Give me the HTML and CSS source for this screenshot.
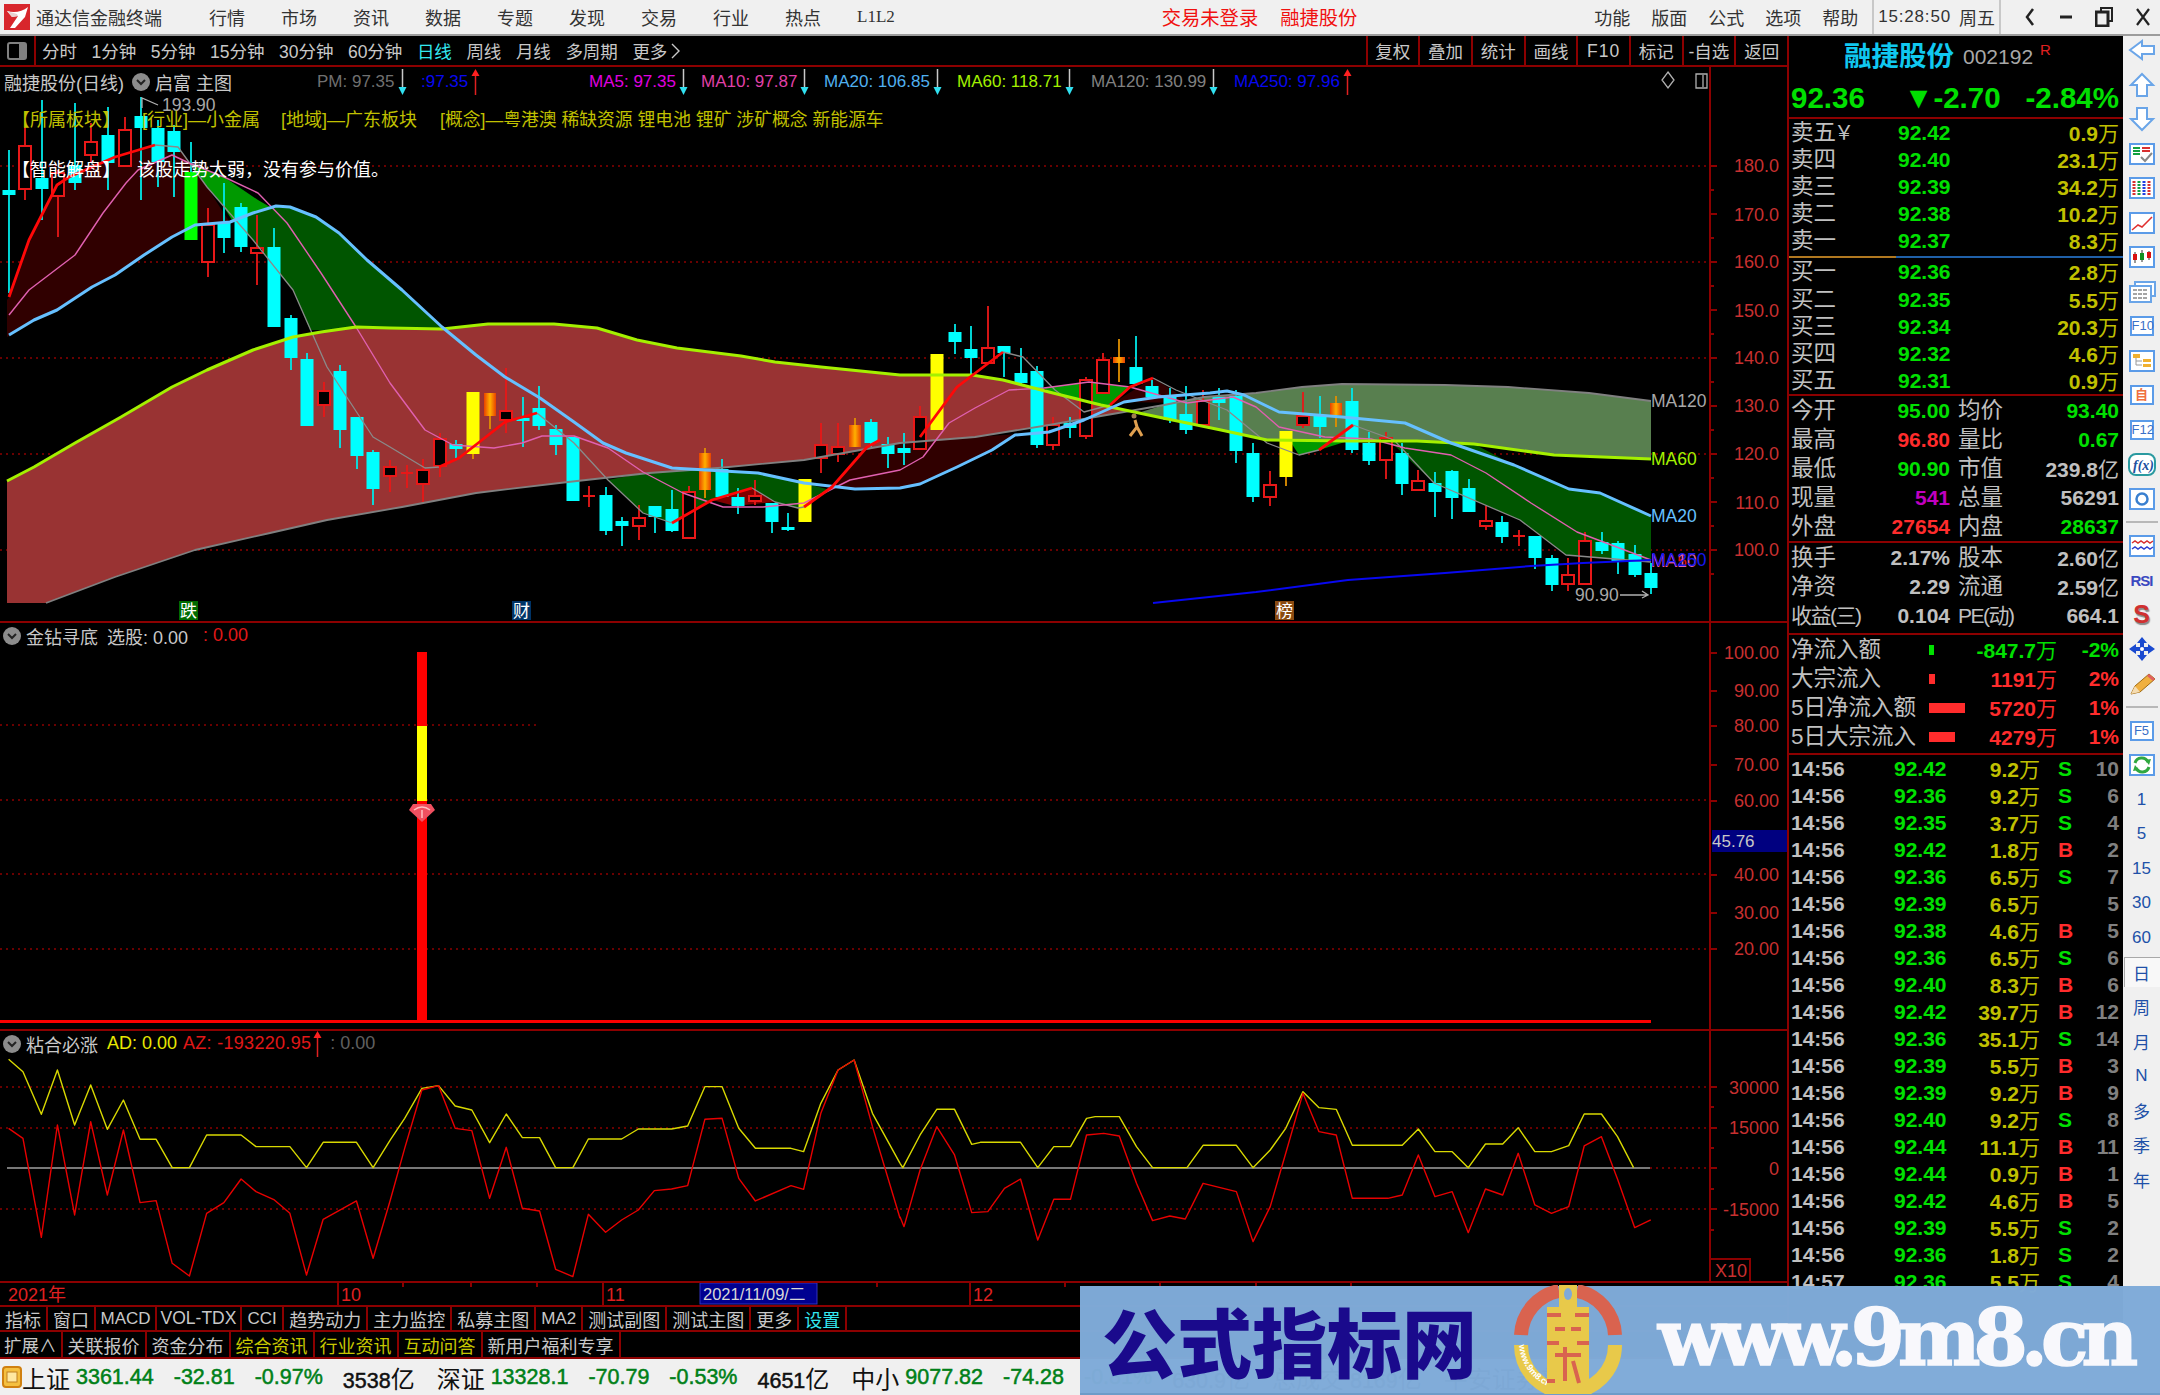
FILE: index.html
```html
<!DOCTYPE html>
<html lang="zh-CN">
<head>
<meta charset="utf-8">
<title>通达信金融终端</title>
<link rel="stylesheet" href="styles.css">
</head>
<body>
<svg class="defs" width="0" height="0" aria-hidden="true">
  <defs>
    <symbol id="arr-up" viewBox="0 0 9 26"><path d="M4.500 6V26" stroke="#e02020" stroke-width="1.500"/><path d="M4.500 0L8.500 7H.5Z" fill="#ff2020"/></symbol>
    <symbol id="arr-dn" viewBox="0 0 9 26"><path d="M4.500 0V20" stroke="#c8c8c8" stroke-width="1.500"/><path d="M4.500 26L8.500 18H.5Z" fill="#30e0f0"/></symbol>
    <symbol id="chev" viewBox="0 0 18 18"><circle cx="9" cy="9" r="9" fill="#8c8c8c"/><path d="M5 7l4 4 4-4" fill="none" stroke="#222" stroke-width="2"/></symbol>
    <linearGradient id="orange" x1="0" x2="1" y1="0" y2="0"><stop offset="0" stop-color="#e84000"/><stop offset=".5" stop-color="#ffb000"/><stop offset="1" stop-color="#e84000"/></linearGradient>
  </defs>
</svg>

<div class="app">
  <header class="titlebar">
    <svg class="logo" viewBox="0 0 26 26"><rect width="26" height="26" fill="#d8262c"/><path d="M24 3C18 8 10 9 3 7L8 13L14 12L6 24L11 24L21 13Z" fill="#fff"/><path d="M3 7L8 13L14 12L13 10Z" fill="#e8d0d0"/></svg>
    <span class="app-name">通达信金融终端</span>
    <nav class="menu">
      <span>行情</span><span>市场</span><span>资讯</span><span>数据</span><span>专题</span><span>发现</span><span>交易</span><span>行业</span><span>热点</span><span class="menu-l2">L1L2</span>
    </nav>
    <div class="login"><span>交易未登录</span><span>融捷股份</span></div>
    <nav class="menu-right"><span>功能</span><span>版面</span><span>公式</span><span>选项</span><span>帮助</span></nav>
    <div class="clock"><span class="clock-time">15:28:50</span><span class="clock-day">周五</span></div>
    <div class="winbtns">
      <svg viewBox="0 0 14 20" class="win-a"><path d="M10 2L4 10L10 18" fill="none" stroke="#222" stroke-width="2.500"/></svg>
      <svg viewBox="0 0 14 20" class="win-b"><path d="M1 10H13" stroke="#222" stroke-width="3"/></svg>
      <svg viewBox="0 0 18 20" class="win-c"><path d="M6 4V1H17V14H13" fill="none" stroke="#222" stroke-width="2"/><rect x="1" y="5" width="12" height="14" fill="none" stroke="#222" stroke-width="3"/></svg>
      <svg viewBox="0 0 16 20" class="win-d"><path d="M2 2L14 18M14 2L2 18" stroke="#222" stroke-width="2.200"/></svg>
    </div>
  </header>

  <div class="middle">
    <main class="left">
      <div class="toolbar">
        <div class="tb-icon"><span class="tb-icon-box"></span></div>
        <div class="periods">
          <span>分时</span><span>1分钟</span><span>5分钟</span><span>15分钟</span><span>30分钟</span><span>60分钟</span><span class="on">日线</span><span>周线</span><span>月线</span><span>多周期</span><span class="more">更多<svg class="more-ic" viewBox="0 0 9 18"><path d="M1 2L8 9L1 16" fill="none" stroke="#c8c8c8" stroke-width="1.400"/></svg></span>
        </div>
        <div class="tb-btns"><span>复权</span><span>叠加</span><span>统计</span><span>画线</span><span class="tb-f10">F10</span><span>标记</span><span>-自选</span><span>返回</span></div>
      </div>

      <section class="pane pane-main">
        <svg class="chart" width="1787" height="554" viewBox="0 67 1787 554">
          <path class="grid" d="M0 166H1710M0 262H1710M0 358H1710M0 454H1710M0 550H1710"/>
          <path class="axis" d="M1710 67V621"/>
          <path class="axis" d="M1710 166h7M1710 214h7M1710 262h7M1710 310h7M1710 358h7M1710 406h7M1710 454h7M1710 502h7M1710 550h7M1710 190h4M1710 238h4M1710 286h4M1710 334h4M1710 382h4M1710 430h4M1710 478h4M1710 526h4M1710 574h4"/>
          <g class="ax">
            <text x="1779" y="172">180.0</text><text x="1779" y="221">170.0</text><text x="1779" y="268">160.0</text><text x="1779" y="317">150.0</text><text x="1779" y="364">140.0</text><text x="1779" y="412">130.0</text><text x="1779" y="460">120.0</text><text x="1779" y="509">110.0</text><text x="1779" y="556">100.0</text>
          </g>

          <polygon fill="#300000" points="9,297 29,240 57,185 69,177 115,157 155,145 178,147 207,187 225,215 230,222 195,225 172,237 144,255 115,275 92,287 57,310 34,320 7,337 7,300"/>
          <polygon fill="#009900" points="178,147 189,163 224,177 258,200 270,207 253,213 232,220 222,204 207,187"/>
          <polygon fill="#005500" points="232,220 253,213 276,206 290,207 316,217 339,233 367,260 402,290 442,329 356,330 310,330 293,290 253,240"/>
          <polygon fill="#005500" points="608,480 643,473 672,468 706,470 758,473 804,483 830,490 798,508 775,502 752,488 712,500 672,523 643,513"/>
          <polygon fill="#800000" points="712,500 752,488 775,502 735,506"/>
          <polygon fill="#300000" points="832,487 867,447 900,443 975,437 1049,432 1015,435 992,450 957,467 920,484 900,488 855,489"/>
          <polygon fill="#009900" points="1049,392 1044,388 1089,382 1130,387 1110,405 1101,405"/>
          <polygon fill="#300000" points="1110,405 1153,378 1180,395 1187,403 1124,402"/>

          <polygon fill="#993333" points="7,481 34,467 75,443 121,417 172,387 207,370 253,350 293,337 321,332 356,327 390,328 442,329 488,324 554,324 597,328 637,340 677,348 741,356 775,362 821,367 900,375 972,375 1003,380 1049,392 1101,405 1141,412 1124,412 1049,425 975,437 900,443 804,460 718,468 649,473 568,482 476,493 402,507 327,520 270,533 195,550 115,577 46,603 7,603"/>
          <polygon fill="#587f4f" points="1141,412 1164,405 1204,397 1256,393 1302,387 1342,384 1445,385 1508,387 1589,393 1651,401 1651,459 1554,455 1474,444 1417,441 1348,441 1267,440 1221,430 1158,417"/>
          <polygon fill="#005500" points="1382,441 1417,441 1474,444 1514,465 1569,489 1600,493 1651,516 1651,562 1566,555 1520,520 1434,483 1394,445"/>
          <polygon fill="#009900" points="1290,441 1348,441 1319,450 1299,455"/>

          <!-- candle wicks -->
          <path class="wick-c" d="M9 150V293M42 100V220M75 103V190M108 107V190M141 97V200M158 120V187M174 125V197M191 142V172M224 183V253M241 203V252M274 228V327M291 315V370M307 353V426M340 365V448M357 417V469M373 450V505M456 440V458M523 397V447M539 386V430M556 425V455M573 437V501M606 487V535M622 517V546M655 506V533M672 490V532M722 459V497M738 488V514M772 503V533M788 513V531M871 419V447M888 437V468M904 433V465M955 324V354M971 326V375M1004 346V377M1021 348V385M1037 366V448M1070 417V438M1136 336V386M1152 380V397M1170 388V423M1186 386V434M1219 388V420M1236 390V463M1253 443V502M1320 396V438M1352 388V453M1369 432V465M1402 443V495M1435 472V517M1452 470V519M1469 479V512M1502 516V543M1535 536V569M1552 555V591M1602 532V554M1618 541V574M1635 545V577M1651 563V594"/>
          <path class="wick-r" d="M25 127V200M58 170V237M91 123V163M125 117V166M208 208V277M257 215V285M324 382V417M390 460V492M407 465V488M423 459V503M440 433V477M506 368V433M589 486V507M639 505V540M689 486V538M755 480V505M821 423V473M838 423V462M920 406V449M988 306V363M1053 417V450M1086 377V439M1103 353V393M1203 390V425M1270 471V506M1303 392V428M1386 432V479M1418 470V490M1486 506V530M1519 530V546M1568 558V591M1585 532V584M401 473H413M583 496H595M1513 536H1525"/>
          <path class="wick-o" d="M490 393V429M705 448V498M855 418V447M1119 339V382M1336 396V427M473 454V459M1286 477V486"/>
          <path class="body-c" d="M9 190V195M42 178V189M75 165V183M108 135V163M141 116V128M158 128V162M174 131V152M224 223V238M241 207V247M274 247V327M291 318V358M307 359V426M340 371V430M357 417V456M373 452V489M456 444V449M523 418V421M539 408V426M556 429V445M573 437V501M606 495V531M622 521V526M655 506V517M672 509V531M722 469V497M738 497V506M772 503V522M788 527V530M871 422V443M888 444V454M904 448V453M955 332V342M971 349V358M1004 346V353M1021 373V383M1037 371V445M1070 423V428M1136 367V384M1152 386V397M1170 397V420M1186 414V430M1219 397V403M1236 396V451M1253 453V497M1320 416V427M1352 401V450M1369 443V461M1402 453V484M1435 483V492M1452 471V498M1469 488V512M1502 522V537M1535 536V558M1552 558V585M1602 542V551M1618 543V562M1635 554V575M1651 573V588"/>
          <path class="body-r" d="M19 146h12v43h-12zM52 173h12v23h-12zM85 142h12v13h-12zM119 130h12v36h-12zM202 225h12v37h-12zM251 248h12v5h-12zM318 391h12v14h-12zM384 467h12v9h-12zM417 470h12v14h-12zM434 439h12v27h-12zM500 411h12v9h-12zM633 518h12v8h-12zM683 492h12v46h-12zM749 496h12v5h-12zM815 445h12v13h-12zM832 447h12v7h-12zM914 417h12v32h-12zM982 348h12v15h-12zM1047 425h12v20h-12zM1080 380h12v56h-12zM1097 360h12v33h-12zM1197 401h12v24h-12zM1264 485h12v12h-12zM1297 416h12v9h-12zM1380 438h12v22h-12zM1412 481h12v9h-12zM1480 521h12v5h-12zM1562 575h12v9h-12zM1579 541h12v43h-12z"/>
          <g fill="url(#orange)">
            <rect x="484" y="393" width="12" height="23"/><rect x="699" y="453" width="12" height="37"/><rect x="849" y="425" width="12" height="22"/><rect x="1113" y="357" width="12" height="6"/><rect x="1330" y="403" width="12" height="12"/>
          </g>
          <path class="body-y" d="M473 392V454M805 479V522M937 354V430M1286 431V477"/>
          <path class="body-g" d="M191 172V240"/>

          <!-- moving averages -->
          <polyline class="ln ma5g" points="155,145 178,147 207,187 253,240 293,290 327,367 373,437 390,447 425,468 439,467"/>
          <polyline class="ln ma5g" points="537,413 574,443 608,480 643,513 672,523"/>
          <polyline class="ln ma5g" points="752,488 775,502 798,508 804,507"/>
          <polyline class="ln ma5g" points="1003,352 1023,357 1055,390 1084,412 1110,405"/>
          <polyline class="ln ma5g" points="1153,378 1176,390 1227,410 1267,443 1299,455 1319,450"/>
          <polyline class="ln ma5g" points="1353,425 1394,440 1434,483 1520,520 1566,555 1651,562"/>
          <polyline class="ln ma120" points="46,603 115,577 195,550 270,533 327,520 402,507 476,493 568,482 649,473 718,468 804,460 900,443 975,437 1049,425 1124,412 1164,405 1204,397 1256,393 1302,387 1342,384 1445,385 1508,387 1589,393 1651,401"/>
          <polyline class="ln ma10" points="9,315 29,290 75,255 103,213 126,183 138,170 172,155 189,163 224,177 258,193 287,223 321,273 356,327 390,383 425,430 453,445 494,448 522,443 542,436 574,436 608,448 643,472 683,493 723,507 763,507 804,503 850,480 900,470 923,457 949,423 975,408 1009,390 1044,388 1089,382 1130,387 1187,403 1233,397 1256,407 1279,427 1325,437 1371,439 1405,448 1451,455 1486,473 1531,503 1577,532 1651,560"/>
          <polyline class="ln ma250" points="1153,603 1256,592 1348,580 1445,573 1531,566 1583,563 1651,560"/>
          <polyline class="ln ma60" points="7,481 34,467 75,443 121,417 172,387 207,370 253,350 293,337 321,332 356,327 390,328 442,329 488,324 554,324 597,328 637,340 677,348 741,356 775,362 821,367 900,375 972,375 1003,380 1049,392 1101,405 1158,417 1221,430 1267,440 1348,441 1417,441 1474,444 1554,455 1651,459"/>
          <polyline class="ln ma20" points="9,335 34,320 57,310 92,287 115,275 144,255 172,237 195,225 230,222 253,213 276,206 290,207 316,217 339,233 367,260 402,290 442,327 476,355 505,377 540,398 574,422 603,443 626,453 672,468 706,470 758,473 804,483 855,489 900,488 920,484 957,467 992,450 1015,435 1049,432 1084,420 1124,402 1158,397 1210,393 1227,391 1244,395 1279,412 1342,417 1405,423 1451,443 1514,465 1569,489 1600,493 1651,516"/>
          <polyline class="ln ma5r" points="9,297 29,240 57,185 69,177 115,157 155,145"/>
          <polyline class="ln ma5r" points="439,467 459,458 482,440 505,422 537,413"/>
          <polyline class="ln ma5r" points="672,523 712,500 752,488"/>
          <polyline class="ln ma5r" points="804,507 832,487 867,447 880,440"/>
          <polyline class="ln ma5r" points="920,437 957,387 1003,352"/>
          <polyline class="ln ma5r" points="1110,405 1130,387 1153,378"/>
          <polyline class="ln ma5r" points="1319,450 1353,425"/>

          <path class="icon-man" d="M1135 420L1137 427L1130 436M1137 427L1142 436"/>
          <circle cx="1134" cy="416" r="2.500" fill="#a08050"/>

          <g class="lbl">
            <text class="l-120" x="1651" y="407">MA120</text>
            <text class="l-60" x="1651" y="465">MA60</text>
            <text class="l-20" x="1651" y="522">MA20</text>
            <text class="l-5" x="1651" y="567">MA5</text>
            <text class="l-10" x="1651" y="567">MA10</text>
            <text class="l-250" x="1651" y="566">MA250</text>
          </g>
          <g class="lbl">
            <text class="l-120" x="1575" y="601">90.90</text>
            <text class="l-120" x="162" y="111">193.90</text>
          </g>
          <path class="thin-g" d="M1620 595H1648M1642 591L1648 595L1642 598M142 108V98L158 105"/>

          <g class="mark">
            <rect x="179" y="601" width="19" height="19" fill="#006a00"/><text x="188.500" y="617">跌</text>
            <rect x="512" y="601" width="19" height="19" fill="#003366"/><text x="521.500" y="617">财</text>
            <rect x="1275" y="601" width="19" height="19" fill="#8a4a10"/><text x="1284.500" y="617">榜</text>
          </g>
          <path class="thin-g" d="M1668 72l6 8-6 8-6-8zM1696 74h11v14h-11zM1703 75v12" />
        </svg>

        <div class="legend">
          <div class="lg-title"><span>融捷股份(日线)</span><svg class="chev"><use href="#chev"/></svg><span class="lg-tpl">启富 主图</span></div>
          <div class="lg lg-pm"><span>PM: 97.35</span><svg class="arr"><use href="#arr-dn"/></svg></div>
          <div class="lg lg-q"><span>:97.35</span><svg class="arr"><use href="#arr-up"/></svg></div>
          <div class="lg lg-5"><span>MA5: 97.35</span><svg class="arr"><use href="#arr-dn"/></svg></div>
          <div class="lg lg-10"><span>MA10: 97.87</span><svg class="arr"><use href="#arr-dn"/></svg></div>
          <div class="lg lg-20"><span>MA20: 106.85</span><svg class="arr"><use href="#arr-dn"/></svg></div>
          <div class="lg lg-60"><span>MA60: 118.71</span><svg class="arr"><use href="#arr-dn"/></svg></div>
          <div class="lg lg-120"><span>MA120: 130.99</span><svg class="arr"><use href="#arr-dn"/></svg></div>
          <div class="lg lg-250"><span>MA250: 97.96</span><svg class="arr"><use href="#arr-up"/></svg></div>
        </div>
        <div class="notes">
          <div class="note-sector"><span class="ns-a">【所属板块】</span><span class="ns-b">[行业]—小金属</span><span class="ns-c">[地域]—广东板块</span><span class="ns-d">[概念]—粤港澳 稀缺资源 锂电池 锂矿 涉矿概念 新能源车</span></div>
          <div class="note-ai"><span>【智能解盘】</span><span>该股走势太弱，没有参与价值。</span></div>
        </div>
      </section>

      <section class="pane pane-zs">
        <svg class="chart" width="1787" height="406" viewBox="0 623 1787 406">
          <path class="grid" d="M0 725H537M0 800H1710M0 874H1710M0 949H1710"/>
          <path class="axis" d="M1710 623V1029"/>
          <path class="axis" d="M1710 653h7M1710 691h7M1710 726h7M1710 765h7M1710 801h7M1710 875h7M1710 913h7M1710 949h7"/>
          <g class="ax">
            <text x="1779" y="659">100.00</text><text x="1779" y="697">90.00</text><text x="1779" y="732">80.00</text><text x="1779" y="771">70.00</text><text x="1779" y="807">60.00</text><text x="1779" y="881">40.00</text><text x="1779" y="919">30.00</text><text x="1779" y="955">20.00</text>
          </g>
          <rect x="417" y="652" width="10" height="368" fill="#ff0000"/>
          <rect x="417" y="726" width="10" height="75" fill="#ffff00"/>
          <rect x="0" y="1020" width="1651" height="3" fill="#ff0000"/>
          <path d="M413 804H431L435 810L422 822L409 810Z" fill="#f05060"/>
          <path d="M414 810Q422 804 430 810M422 810V818" fill="none" stroke="#ffc0c0" stroke-width="1.500"/>
          <rect x="1712" y="830" width="75" height="22" fill="#000080"/>
          <text class="ax-sel" x="1712" y="847">45.76</text>
        </svg>
        <div class="legend legend-sub">
          <svg class="chev chev-sub"><use href="#chev"/></svg>
          <span class="sub-name">金钻寻底</span>
          <span class="zs-a">选股: 0.00</span>
          <span class="zs-b">: 0.00</span>
        </div>
      </section>

      <section class="pane pane-ad">
        <svg class="chart" width="1787" height="250" viewBox="0 1031 1787 250">
          <path class="grid" d="M0 1087H1710M0 1128H1710M0 1209H1710M1650 1168H1710"/>
          <path class="axis" d="M1710 1031V1281"/>
          <path class="axis" d="M1710 1087h7M1710 1128h7M1710 1168h7M1710 1209h7M1710 1107h4M1710 1148h4M1710 1189h4M1710 1230h4M1710 1259H1750V1281"/>
          <g class="ax">
            <text x="1779" y="1094">30000</text><text x="1779" y="1134">15000</text><text x="1779" y="1175">0</text><text x="1779" y="1216">-15000</text>
          </g>
          <text class="ax ax-x10" x="1715" y="1277">X10</text>
          <path class="zero" d="M7 1168H1650"/>
          <g transform="translate(0 1020) scale(.574 .3333)">
            <polyline class="ln ad-y" points="15,118 40,155 72,283 100,150 130,315 158,195 187,328 215,240 244,358 272,358 300,443 330,443 360,345 420,345 446,380 505,380 534,443 563,367 621,367 650,443 680,360 705,295 735,205 764,197 793,258 822,270 853,368 882,282 910,353 940,353 968,443 998,443 1025,357 1083,357 1112,327 1170,327 1198,318 1228,200 1258,200 1287,325 1316,385 1378,385 1400,395 1430,250 1460,150 1488,120 1520,280 1568,430"/>
            <polyline class="ln ad-r" points="15,325 40,355 72,652 100,315 130,585 158,305 187,525 215,330 244,548 272,542 300,730 330,768 360,580 390,548 420,477 446,515 478,540 505,580 534,765 563,598 621,543 650,715 680,540 705,385 735,210 764,197 793,325 822,332 853,535 882,382 910,565 940,573 968,748 998,770 1025,583 1055,637 1083,600 1112,570 1140,512 1170,507 1198,497 1228,298 1258,295 1287,475 1316,543 1378,497 1400,508 1430,280 1460,150 1488,120 1520,320 1568,595"/>
          </g>
          <g transform="translate(900 1020) scale(.574 .3333)">
            <polyline class="ln ad-y" points="0,430 5,443 35,345 64,268 95,268 125,373 140,367 210,367 240,443 268,380 297,380 325,295 340,290 382,290 412,380 440,443 500,443 528,376 586,376 615,443 645,390 672,325 702,215 730,263 760,268 788,376 875,376 903,327 932,395 962,395 990,443 1020,372 1050,372 1077,323 1106,395 1135,395 1165,377 1192,282 1222,282 1250,350 1278,443"/>
            <polyline class="ln ad-r" points="0,590 7,620 35,450 64,320 95,405 125,578 153,575 182,505 210,477 240,660 268,538 297,538 325,345 355,340 382,348 412,490 440,602 470,588 497,597 528,490 586,515 615,665 645,560 672,400 702,220 730,335 760,345 788,535 850,535 875,525 903,405 932,530 962,515 990,638 1020,507 1050,525 1077,400 1106,555 1135,580 1165,560 1192,378 1222,350 1250,477 1280,623 1308,600"/>
          </g>
        </svg>
        <div class="legend legend-sub">
          <svg class="chev chev-sub"><use href="#chev"/></svg>
          <span class="sub-name">粘合必涨</span>
          <span class="ad-a">AD: 0.00</span>
          <span class="ad-b">AZ: -193220.95</span>
          <svg class="arr"><use href="#arr-up"/></svg>
          <span class="ad-c">: 0.00</span>
        </div>
      </section>

      <div class="timeaxis">
        <svg class="chart" width="1787" height="22" viewBox="0 1283 1787 22">
          <path class="axis" d="M338 1283V1305M603 1283V1305M970 1283V1305M403 1283v4M471 1283v4M537 1283v4M702 1283v4M877 1283v4M1065 1283v4M1160 1283v4M1256 1283v4M1351 1283v4"/>
          <g class="tx">
            <text x="8" y="1301">2021年</text><text x="341" y="1301">10</text><text x="606" y="1301">11</text><text x="973" y="1301">12</text>
          </g>
          <rect x="700" y="1283" width="117" height="21" fill="#000090" stroke="#3030c0"/>
          <text class="tx-date" x="703" y="1300">2021/11/09/二</text>
        </svg>
      </div>

      <nav class="tabs tabs-a">
        <span>指标</span><span>窗口</span><span class="t-en">MACD</span><span class="t-en t-vol">VOL-TDX</span><span class="t-en t-cci">CCI</span><span>趋势动力</span><span>主力监控</span><span>私募主图</span><span class="t-en t-ma">MA2</span><span>测试副图</span><span>测试主图</span><span>更多</span><span class="t-cy">设置</span>
      </nav>
      <nav class="tabs tabs-b">
        <span class="t-ext">扩展∧</span><span>关联报价</span><span>资金分布</span><span class="t-yl">综合资讯</span><span class="t-yl">行业资讯</span><span class="t-yl">互动问答</span><span>新用户福利专享</span>
      </nav>
    </main>

    <aside class="panel">
      <div class="quote">
        <div class="q-name"><span class="q-title">融捷股份</span><span class="q-code">002192</span><sup class="q-r">R</sup></div>
        <div class="q-price"><span>92.36</span><span class="q-chg"><i class="q-down">▼</i>-2.70</span><span>-2.84%</span></div>
      </div>
      <div class="book book-sell">
        <div class="b-row"><span>卖五<em class="yen">￥</em></span><b>92.42</b><u>0.9<s>万</s></u></div>
        <div class="b-row"><span>卖四</span><b>92.40</b><u>23.1<s>万</s></u></div>
        <div class="b-row"><span>卖三</span><b>92.39</b><u>34.2<s>万</s></u></div>
        <div class="b-row"><span>卖二</span><b>92.38</b><u>10.2<s>万</s></u></div>
        <div class="b-row"><span>卖一</span><b>92.37</b><u>8.3<s>万</s></u></div>
      </div>
      <div class="book book-buy">
        <div class="b-row"><span>买一</span><b>92.36</b><u>2.8<s>万</s></u></div>
        <div class="b-row"><span>买二</span><b>92.35</b><u>5.5<s>万</s></u></div>
        <div class="b-row"><span>买三</span><b>92.34</b><u>20.3<s>万</s></u></div>
        <div class="b-row"><span>买四</span><b>92.32</b><u>4.6<s>万</s></u></div>
        <div class="b-row"><span>买五</span><b>92.31</b><u>0.9<s>万</s></u></div>
      </div>
      <div class="stats">
        <div class="s-row"><span>今开</span><b class="g">95.00</b><span>均价</span><b class="g">93.40</b></div>
        <div class="s-row"><span>最高</span><b class="r">96.80</b><span>量比</span><b class="g">0.67</b></div>
        <div class="s-row"><span>最低</span><b class="g">90.90</b><span>市值</span><b class="w">239.8<s>亿</s></b></div>
        <div class="s-row"><span>现量</span><b class="m">541</b><span>总量</span><b class="w">56291</b></div>
        <div class="s-row"><span>外盘</span><b class="r">27654</b><span>内盘</span><b class="g">28637</b></div>
      </div>
      <div class="stats stats-b">
        <div class="s-row"><span>换手</span><b class="w">2.17%</b><span>股本</span><b class="w">2.60<s>亿</s></b></div>
        <div class="s-row"><span>净资</span><b class="w">2.29</b><span>流通</span><b class="w">2.59<s>亿</s></b></div>
        <div class="s-row"><span class="s-narrow">收益(三)</span><b class="w">0.104</b><span class="s-narrow">PE(动)</span><b class="w">664.1</b></div>
      </div>
      <div class="flow">
        <div class="f-row"><span>净流入额</span><i class="bar bar-g" style="width:5px"></i><b class="g">-847.7<s>万</s></b><b class="g">-2%</b></div>
        <div class="f-row"><span>大宗流入</span><i class="bar bar-r" style="width:6px"></i><b class="r">1191<s>万</s></b><b class="r">2%</b></div>
        <div class="f-row"><span>5日净流入额</span><i class="bar bar-r" style="width:36px"></i><b class="r">5720<s>万</s></b><b class="r">1%</b></div>
        <div class="f-row"><span>5日大宗流入</span><i class="bar bar-r" style="width:26px"></i><b class="r">4279<s>万</s></b><b class="r">1%</b></div>
      </div>
      <div class="ticks">
        <div class="t-row"><span>14:56</span><b>92.42</b><u>9.2<s>万</s></u><i class="S">S</i><em>10</em></div>
        <div class="t-row"><span>14:56</span><b>92.36</b><u>9.2<s>万</s></u><i class="S">S</i><em>6</em></div>
        <div class="t-row"><span>14:56</span><b>92.35</b><u>3.7<s>万</s></u><i class="S">S</i><em>4</em></div>
        <div class="t-row"><span>14:56</span><b>92.42</b><u>1.8<s>万</s></u><i class="B">B</i><em>2</em></div>
        <div class="t-row"><span>14:56</span><b>92.36</b><u>6.5<s>万</s></u><i class="S">S</i><em>7</em></div>
        <div class="t-row"><span>14:56</span><b>92.39</b><u>6.5<s>万</s></u><i></i><em>5</em></div>
        <div class="t-row"><span>14:56</span><b>92.38</b><u>4.6<s>万</s></u><i class="B">B</i><em>5</em></div>
        <div class="t-row"><span>14:56</span><b>92.36</b><u>6.5<s>万</s></u><i class="S">S</i><em>6</em></div>
        <div class="t-row"><span>14:56</span><b>92.40</b><u>8.3<s>万</s></u><i class="B">B</i><em>6</em></div>
        <div class="t-row"><span>14:56</span><b>92.42</b><u>39.7<s>万</s></u><i class="B">B</i><em>12</em></div>
        <div class="t-row"><span>14:56</span><b>92.36</b><u>35.1<s>万</s></u><i class="S">S</i><em>14</em></div>
        <div class="t-row"><span>14:56</span><b>92.39</b><u>5.5<s>万</s></u><i class="B">B</i><em>3</em></div>
        <div class="t-row"><span>14:56</span><b>92.39</b><u>9.2<s>万</s></u><i class="B">B</i><em>9</em></div>
        <div class="t-row"><span>14:56</span><b>92.40</b><u>9.2<s>万</s></u><i class="S">S</i><em>8</em></div>
        <div class="t-row"><span>14:56</span><b>92.44</b><u>11.1<s>万</s></u><i class="B">B</i><em>11</em></div>
        <div class="t-row"><span>14:56</span><b>92.44</b><u>0.9<s>万</s></u><i class="B">B</i><em>1</em></div>
        <div class="t-row"><span>14:56</span><b>92.42</b><u>4.6<s>万</s></u><i class="B">B</i><em>5</em></div>
        <div class="t-row"><span>14:56</span><b>92.39</b><u>5.5<s>万</s></u><i class="S">S</i><em>2</em></div>
        <div class="t-row"><span>14:56</span><b>92.36</b><u>1.8<s>万</s></u><i class="S">S</i><em>2</em></div>
        <div class="t-row"><span>14:57</span><b>92.36</b><u>5.5<s>万</s></u><i class="S">S</i><em>4</em></div>
      </div>
    </aside>

    <aside class="side">
      <svg class="si" viewBox="0 0 30 28"><path d="M3 14L15 5V10H27V18H15V23Z" fill="#fff" stroke="#6aa5e8" stroke-width="2"/></svg>
      <svg class="si" viewBox="0 0 30 28"><path d="M15 3L26 14H20V25H10V14H4Z" fill="#fff" stroke="#6aa5e8" stroke-width="2"/></svg>
      <svg class="si" viewBox="0 0 30 28"><path d="M15 25L26 14H20V3H10V14H4Z" fill="#fff" stroke="#6aa5e8" stroke-width="2"/></svg>
      <svg class="si" viewBox="0 0 30 28"><rect x="3" y="4" width="24" height="20" fill="#fff" stroke="#5b9be8" stroke-width="2"/><path d="M6 8h7M6 11h7M6 14h7" stroke="#12a040" stroke-width="2"/><path d="M15 8h8M15 11h8" stroke="#d83030" stroke-width="2"/><path d="M14 17l4 4 7-8" fill="none" stroke="#888" stroke-width="2"/></svg>
      <svg class="si" viewBox="0 0 30 28"><rect x="3" y="4" width="24" height="20" fill="#fff" stroke="#5b9be8" stroke-width="2"/><path d="M7 7V21" stroke="#d83030" stroke-width="3" stroke-dasharray="2 1"/><path d="M12 7V21" stroke="#12a040" stroke-width="3" stroke-dasharray="2 1"/><path d="M17 7V21" stroke="#2040e0" stroke-width="3" stroke-dasharray="2 1"/><path d="M22 7V21" stroke="#d83030" stroke-width="3" stroke-dasharray="2 1"/></svg>
      <svg class="si" viewBox="0 0 30 28"><rect x="3" y="4" width="24" height="20" fill="#fff" stroke="#5b9be8" stroke-width="2"/><path d="M5 21L11 16L15 18L25 8" fill="none" stroke="#e03030" stroke-width="1.500"/></svg>
      <svg class="si" viewBox="0 0 30 28"><rect x="3" y="4" width="24" height="20" fill="#fff" stroke="#5b9be8" stroke-width="2"/><path d="M8 9V20M15 7V19M22 8V17" stroke="#333"/><rect x="6" y="11" width="4" height="6" fill="#d81010"/><rect x="13" y="10" width="4" height="7" fill="#109020"/><rect x="20" y="9" width="4" height="6" fill="#d81010"/></svg>
      <svg class="si" viewBox="0 0 30 28"><path d="M8 7V4H28V18H24" fill="#fff" stroke="#6aa5e8" stroke-width="2"/><rect x="3" y="8" width="21" height="16" fill="#fff" stroke="#6aa5e8" stroke-width="2"/><path d="M6 12h15M6 16h15M6 20h15" stroke="#888" stroke-width="1.500" stroke-dasharray="4 1"/></svg>
      <div class="si-box"><span>F10</span></div>
      <svg class="si" viewBox="0 0 30 28"><rect x="3" y="4" width="24" height="20" fill="#fff" stroke="#5b9be8" stroke-width="2"/><path d="M9 9V18H15M9 14H15" fill="none" stroke="#999"/><rect x="6" y="7" width="7" height="4" fill="#f0b030"/><rect x="16" y="12" width="8" height="3" fill="#f0b030"/><rect x="16" y="17" width="8" height="3" fill="#f0b030"/></svg>
      <div class="si-box si-self"><span>自</span></div>
      <div class="si-box"><span>F12</span></div>
      <svg class="si" viewBox="0 0 30 28"><rect x="2" y="4" width="26" height="21" rx="7" fill="#fff" stroke="#2a9aa0" stroke-width="2"/><text class="si-fx" x="6" y="20">f(x)</text></svg>
      <svg class="si" viewBox="0 0 30 28"><rect x="3" y="4" width="24" height="20" fill="#fff" stroke="#5b9be8" stroke-width="2"/><circle cx="15" cy="14" r="5.500" fill="none" stroke="#3a80d0" stroke-width="2.500"/></svg>
      <div class="sep"></div>
      <svg class="si" viewBox="0 0 30 28"><rect x="3" y="4" width="24" height="20" fill="#fff" stroke="#5b9be8" stroke-width="2"/><path d="M5 11l3-2 3 2 3-2 3 2 3-2 3 2 3-2" fill="none" stroke="#d83030" stroke-width="1.500"/><path d="M5 17l3-2 3 2 3-2 3 2 3-2 3 2 3-2" fill="none" stroke="#3040d0" stroke-width="1.500"/></svg>
      <div class="si-text si-rsi">RSI</div>
      <div class="si-text si-s">S</div>
      <svg class="si" viewBox="0 0 30 28"><path d="M15 2L20 8H17V12H21V9L28 14L21 19V16H17V20H20L15 26L10 20H13V16H9V19L2 14L9 9V12H13V8H10Z" fill="#1a4ad0"/><circle cx="15" cy="14" r="2" fill="#fff"/></svg>
      <svg class="si" viewBox="0 0 30 28"><path d="M4 24L8 16L22 4L28 9L13 22Z" fill="#f0b040" stroke="#a06a10"/><path d="M4 24L8 16L13 22Z" fill="#f5dcb0"/><path d="M22 4L28 9L26 11L20 6Z" fill="#e06060"/></svg>
      <div class="sep"></div>
      <div class="si-box"><span>F5</span></div>
      <svg class="si" viewBox="0 0 30 28"><rect x="3" y="4" width="24" height="20" fill="#fff" stroke="#5b9be8" stroke-width="2"/><path d="M8 12A7 7 0 0 1 21 11M22 16A7 7 0 0 1 9 17" fill="none" stroke="#30a840" stroke-width="3"/><path d="M18 9L24 8L22 14ZM12 19L6 20L8 14Z" fill="#30a840"/></svg>
      <div class="sp">1</div><div class="sp">5</div><div class="sp">15</div><div class="sp">30</div><div class="sp">60</div>
      <div class="sp sp-on">日</div><div class="sp">周</div><div class="sp">月</div><div class="sp">N</div><div class="sp">多</div><div class="sp">季</div><div class="sp">年</div>
    </aside>
  </div>

  <footer class="status">
    <svg class="st-icon" viewBox="0 0 20 22"><rect x="1" y="1" width="18" height="20" rx="3" fill="#f5c040" stroke="#d08010" stroke-width="2"/><rect x="5" y="6" width="10" height="10" fill="#ffe8a0" stroke="#c08020"/></svg>
    <span class="st-name">上证</span><b>3361.44</b><b>-32.81</b><b>-0.97%</b><span class="st-amt">3538<s>亿</s></span>
    <span class="st-name">深证</span><b>13328.1</b><b>-70.79</b><b>-0.53%</b><span class="st-amt">4651<s>亿</s></span>
    <span class="st-name">中小</span><b>9077.82</b><b>-74.28</b><b>-0.81%</b><span class="st-amt">630.9<s>亿</s></span>
    <span class="st-name">总成交</span><span class="st-amt">8169<s>亿</s></span><span class="st-name">平安证券普川</span>
  </footer>

  <div class="watermark">
    <span class="wm-cn">公式指标网</span>
    <svg class="wm-logo" width="110" height="109" viewBox="0 0 110 109">
      <defs><path id="wm-arc" d="M6 60A49 49 0 0 0 48 105"/></defs>
      <path d="M8 50A47 47 0 0 1 46 6" fill="none" stroke="#d9634f" stroke-width="14"/>
      <path d="M102 50A47 47 0 0 0 64 6" fill="none" stroke="#d9634f" stroke-width="14"/>
      <path d="M8 60A47 47 0 0 0 102 60" fill="none" stroke="#e8c94a" stroke-width="14"/>
      <text class="wm-small"><textPath href="#wm-arc">www.9m8.cn</textPath></text>
      <rect x="46" y="0" width="18" height="24" fill="#e8c94a"/><ellipse cx="55" cy="9" rx="4" ry="6" fill="#80aad8"/>
      <rect x="34" y="22" width="42" height="80" fill="#e8c94a"/>
      <path d="M34 30h14M62 30h14M42 44h10M58 44h10M34 58h12M64 58h12M42 70h26M52 62v34M60 76l6 22M34 96h8" stroke="#d9634f" stroke-width="4" fill="none"/>
    </svg>
    <span class="wm-en">www.9m8.cn</span>
  </div>
</div>
</body>
</html>
```

FILE: styles.css
```css
* { box-sizing: border-box; }
html, body { margin: 0; padding: 0; background: #000; }
body { font-family: "Liberation Sans", "Noto Sans CJK SC", sans-serif; }
.defs { position: absolute; }
s, u { text-decoration: none; }
i, em { font-style: normal; }
s { font-family: "Noto Sans CJK SC", sans-serif; font-weight: 400; }

.app { position: relative; width: 2160px; height: 1395px; overflow: hidden; display: flex; flex-direction: column; background: #000; }

/* title bar */
.titlebar { height: 36px; flex: none; background: #f0f0f0; border-bottom: 2px solid #9c9c9c; display: flex; align-items: center; padding-left: 4px; color: #333; font-size: 18px; }
.logo { width: 26px; height: 26px; flex: none; }
.app-name { margin-left: 6px; width: 126px; white-space: nowrap; }
.menu { display: flex; align-items: center; gap: 36px; margin-left: 47px; }
.menu-l2 { font-family: "Liberation Serif", serif; font-size: 17px; line-height: 26px; }
.login { display: flex; gap: 22px; margin-left: 267px; color: #f01010; font-size: 19.300px; }
.menu-right { display: flex; gap: 21px; margin-left: 237px; }
.clock { display: flex; align-items: center; gap: 8px; margin-left: 14px; height: 34px; padding: 0 4px; border-left: 2px solid #c8c8c8; border-right: 2px solid #c8c8c8; font-size: 17px; }
.clock-time { letter-spacing: .8px; }
.clock-day { font-size: 18px; }
.winbtns { position: relative; flex: 1; display: flex; align-items: center; height: 34px; gap: 22px; padding-left: 22px; }
.winbtns svg { height: 20px; flex: none; }
.win-a { width: 14px; }
.win-b { width: 14px; }
.win-c { width: 18px; }
.win-d { width: 16px; }

/* layout */
.middle { flex: none; height: 1323px; display: flex; }
.left { width: 1787px; flex: none; display: flex; flex-direction: column; background: #000; }
.toolbar { height: 31px; flex: none; border-bottom: 2px solid #8c0000; display: flex; align-items: center; color: #c8c8c8; font-size: 17.500px; }
.tb-icon { width: 36px; height: 100%; border-right: 2px solid #8c0000; display: flex; align-items: center; justify-content: center; }
.tb-icon-box { width: 20px; height: 18px; border: 2px solid #808080; border-radius: 3px; border-right-width: 8px; }
.periods { display: flex; gap: 14.500px; margin-left: 6px; white-space: nowrap; }
.periods .on { color: #33e8f0; }
.more { display: flex; align-items: center; gap: 4px; }
.more-ic { width: 9px; height: 18px; }
.tb-btns { margin-left: auto; display: flex; height: 100%; }
.tb-btns span { width: 52.700px; display: flex; align-items: center; justify-content: center; border-left: 2px solid #8c0000; white-space: nowrap; font-size: 17.500px; }
.tb-btns .tb-f10 { letter-spacing: 1px; padding-top: 2px; }

/* panes */
.pane { position: relative; flex: none; border-bottom: 2px solid #8c0000; }
.pane-main { height: 556px; }
.pane-zs { height: 408px; }
.pane-ad { height: 252px; }
.chart { display: block; font-family: "Liberation Sans", "Noto Sans CJK SC", sans-serif; }
.grid { fill: none; stroke: #8c0000; stroke-width: 1.500; stroke-dasharray: 2 4; }
.axis { fill: none; stroke: #8c0000; stroke-width: 2; }
.ax text, .ax-x10 { fill: #c83030; font-size: 18px; text-anchor: end; }
.ax-x10 { text-anchor: start; }
.ax-sel { fill: #c8c8c8; font-size: 17px; }
.wick-c, .wick-r, .wick-o { fill: none; stroke-width: 1.800; }
.wick-c { stroke: #00e8e8; }
.wick-r { stroke: #e81818; }
.wick-o { stroke: #e09000; }
.body-c, .body-y, .body-g { fill: none; stroke-width: 13px; }
.body-c { stroke: #00ffff; }
.body-y { stroke: #ffff00; }
.body-g { stroke: #00ff00; }
.body-r { fill: #000; stroke: #e81818; stroke-width: 2; }
.ln { fill: none; vector-effect: non-scaling-stroke; stroke-linejoin: round; }
.ma5g { stroke: #8a8a8a; stroke-width: 1.300; }
.ma5r { stroke: #ff0808; stroke-width: 2.800; }
.ma10 { stroke: #e060b0; stroke-width: 1.400; }
.ma20 { stroke: #66c0ff; stroke-width: 3; }
.ma60 { stroke: #a4f000; stroke-width: 3; }
.ma120 { stroke: #808080; stroke-width: 1.800; }
.ma250 { stroke: #0808f0; stroke-width: 2; }
.ad-y { stroke: #d8d800; stroke-width: 1.400; }
.ad-r { stroke: #e80000; stroke-width: 1.400; }
.zero { fill: none; stroke: #a0a0a0; stroke-width: 1.500; }
.icon-man { fill: none; stroke: #e0a050; stroke-width: 3; }
.thin-g { fill: none; stroke: #b0b0b0; stroke-width: 1.300; }
.lbl text { font-size: 17.500px; }
.l-120 { fill: #a8a8a8; }
.l-60 { fill: #a4f000; }
.l-20 { fill: #66c0ff; }
.l-5 { fill: #e01010; }
.l-10 { fill: #e060b0; }
.l-250 { fill: #1818f0; }
.mark text { fill: #fff; font-size: 17px; text-anchor: middle; }

/* legends over charts */
.legend { position: absolute; left: 0; top: 0; height: 30px; width: 1700px; display: flex; align-items: center; font-size: 17px; white-space: nowrap; }
.legend-sub { height: 25px; font-size: 18px; }
.lg-title { width: 317px; display: flex; align-items: center; color: #c8c8c8; font-size: 18px; padding-left: 4px; }
.chev { width: 18px; height: 18px; flex: none; margin-left: 8px; }
.chev-sub { margin-left: 3px; }
.lg-tpl { margin-left: 5px; }
.lg { display: flex; align-items: center; gap: 3px; flex: none; }
.arr { width: 9px; height: 26px; flex: none; }
.lg-pm { width: 104px; color: #707070; }
.lg-q { width: 168px; color: #0808f0; }
.lg-5 { width: 112px; color: #e000e0; }
.lg-10 { width: 123px; color: #e040a8; }
.lg-20 { width: 133px; color: #50b0f0; }
.lg-60 { width: 134px; color: #a4f000; }
.lg-120 { width: 143px; color: #808080; }
.lg-250 { width: 130px; color: #0808f0; }
.notes { position: absolute; left: 12px; top: 40px; font-size: 18px; line-height: 26px; white-space: nowrap; }
.note-sector { display: flex; color: #c0c000; }
.ns-a { width: 130px; }
.ns-b { width: 139px; }
.ns-c { width: 159px; }
.ns-d { font-size: 17.800px; }
.note-ai { display: flex; color: #fff; margin-top: 24px; gap: 17px; }
.sub-name { color: #c8c8c8; font-size: 18px; margin-left: 5px; width: 81px; }
.zs-a { color: #c8c8c8; width: 96px; }
.zs-b { color: #e01818; }
.ad-a { color: #e8e800; width: 76px; }
.ad-b { color: #e01818; margin-right: 2px; letter-spacing: .3px; }
.ad-c { color: #606060; margin-left: 8px; }

/* time axis and tabs */
.timeaxis { height: 24px; flex: none; border-bottom: 2px solid #8c0000; }
.tx text { fill: #e02020; font-size: 18px; }
.tx-date { fill: #d8d8d8; font-size: 16.500px; }
.tabs { display: flex; flex: none; border-bottom: 2px solid #8c0000; color: #c8c8c8; font-size: 18px; }
.tabs span { display: flex; align-items: center; padding: 0 5px; border-right: 2px solid #8c0000; white-space: nowrap; }
.tabs-a { height: 25px; }
.tabs-b { height: 27px; }
.tabs .t-en { padding: 0 4.500px; font-size: 17px; }
.tabs .t-vol { padding: 0 3.500px; font-size: 17.500px; }
.tabs .t-cci { padding: 0 5.500px; }
.tabs .t-ma { padding: 0 5px; }
.tabs .t-ext { padding: 0 4px; font-size: 17.500px; }
.t-cy { color: #33e8f0; }
.t-yl { color: #c8c800; }

/* right panel */
.panel { width: 336px; flex: none; height: 1323px; overflow: hidden; border-left: 2px solid #8c0000; background: #000; color: #c0c0c0; font-size: 22.500px; }
.panel b { font-weight: 700; font-size: 21px; }
.quote { height: 83px; border-bottom: 2px solid #8c0000; padding: 0 4px 0 2px; }
.q-name { height: 42px; display: flex; align-items: center; padding-left: 53px; }
.q-title { color: #10c8f0; font-size: 27.500px; font-weight: 700; white-space: nowrap; margin-top: -6px; }
.q-code { color: #a8a8a8; font-size: 21px; margin-left: 9px; }
.q-r { color: #e02020; font-size: 15px; align-self: flex-start; margin: 5px 0 0 7px; }
.q-price { display: flex; height: 40px; align-items: center; color: #00e000; font-size: 29.500px; font-weight: 700; justify-content: space-between; white-space: nowrap; }
.q-chg { margin-left: 14px; }
.q-down { font-size: 30px; }
.book { padding: 0 4px 0 2px; }
.book-sell { padding-bottom: 2px; border-bottom: 2px solid; border-image: linear-gradient(90deg, #b07820 0 32%, #2060a8 32% 100%) 1; }
.book-buy { border-bottom: 2px solid #8c0000; }
.b-row { display: grid; grid-template-columns: 107px 1fr auto; height: 27.100px; line-height: 27px; white-space: nowrap; }
.b-row b { color: #00e000; }
.b-row u { color: #c0c000; font-weight: 700; font-size: 21px; }
.yen { font-size: 20px; margin-left: -2px; }
.stats { padding: 0 4px 0 2px; border-bottom: 2px solid #8c0000; }
.s-row { display: grid; grid-template-columns: 60px 99px 72px 1fr; height: 29px; line-height: 29px; white-space: nowrap; }
.s-row b { text-align: right; }
.s-row span:nth-of-type(2) { padding-left: 8px; }
.s-narrow { font-size: 21px; letter-spacing: -1.500px; }
.stats-b { padding-bottom: 3px; }
.g { color: #00e000; }
.r { color: #ff2c2c; }
.w { color: #c0c0c0; }
.m { color: #c000c0; }
.flow { padding: 0 4px 2px 2px; border-bottom: 2px solid #8c0000; }
.f-row { display: grid; grid-template-columns: 138px 40px 88px 62px; height: 29px; line-height: 29px; align-items: center; white-space: nowrap; }
.f-row b { text-align: right; }
.bar { display: block; height: 10px; }
.bar-g { background: #00e000; }
.bar-r { background: #ff2c2c; }
.ticks { padding: 0 4px 0 2px; }
.t-row { display: grid; grid-template-columns: 103px 60px 86px 40px 39px; height: 27px; line-height: 27px; white-space: nowrap; }
.t-row span { font-size: 21px; font-weight: 700; color: #c0c0c0; }
.t-row b { color: #00e000; }
.t-row u { text-align: right; color: #c0c000; font-weight: 700; font-size: 21px; }
.t-row i { padding-left: 18px; font-size: 21px; font-weight: 700; }
.t-row em { text-align: right; font-size: 21px; font-weight: 700; color: #808080; }
.S { color: #00e000; }
.B { color: #ff2c2c; }

/* sidebar */
.side { flex: 1; background: #f0f0f0; display: flex; flex-direction: column; align-items: center; gap: 6.500px; }
.si { width: 30px; height: 28px; flex: none; }
.sep { width: 32px; height: 6px; flex: none; border-top: 2px solid #b8b8b8; margin-top: 2px; margin-bottom: -2px; }
.si-box { height: 28px; width: 30px; flex: none; display: flex; align-items: center; justify-content: center; }
.si-box span { width: 24px; height: 20px; background: #fff; border: 2px solid #5b9be8; color: #3a70c8; font-size: 13px; line-height: 16px; text-align: center; }
.si-self span { color: #f07040; font-weight: 700; }
.si-fx { fill: #2050a0; font-size: 14px; font-style: italic; font-family: "Liberation Serif", serif; font-weight: 700; }
.si-text { height: 28px; flex: none; display: flex; align-items: center; }
.si-rsi { color: #3a48c0; font-weight: 700; font-size: 15px; letter-spacing: -1px; }
.si-s { color: #d03030; font-weight: 700; font-size: 25px; text-shadow: 1px 2px 1px #888; }
.sp { width: 36px; height: 28px; flex: none; display: flex; align-items: center; justify-content: center; color: #2050a8; font-size: 17px; }
.sp-on { position: relative; background: #f8f8f8; box-shadow: inset 1px 1px 0 #a8a8a8; height: 30px; margin: -1px 0; }

/* status bar */
.status { flex: 1; background: #f0f0f0; display: flex; align-items: center; padding-left: 2px; font-size: 21.500px; color: #111; white-space: nowrap; gap: 20px; }
.st-icon { width: 20px; height: 22px; flex: none; margin-right: -22px; }
.status b { font-weight: 400; color: #008018; -webkit-text-stroke: .5px #008018; }
.st-name { font-size: 24px; margin-left: 2px; margin-right: -14px; }
.st-amt { -webkit-text-stroke: .5px #111; }
.st-amt s { -webkit-text-stroke: 0; font-size: 24px; }

/* watermark */
.watermark { position: absolute; left: 1080px; top: 1286px; right: 0; bottom: 0; background: rgba(127, 171, 216, .985); display: flex; align-items: center; border-bottom: 2px solid #6f9cc8; }
.wm-cn { margin-left: 22px; width: 376px; color: #1a0a8c; font-family: "Noto Sans CJK SC", sans-serif; font-weight: 900; font-size: 75px; line-height: 1; white-space: nowrap; }
.wm-logo { flex: none; margin-left: 35px; }
.wm-small { fill: #fff; font-size: 9px; font-family: "Liberation Sans", sans-serif; font-weight: 700; }
.wm-en { margin-left: 35px; margin-top: -4px; color: #f8f8fc; font-family: "DejaVu Serif", serif; font-weight: 700; font-size: 78px; letter-spacing: -7px; line-height: 1; white-space: nowrap; -webkit-text-stroke: 1.500px #f8f8fc; }
```
